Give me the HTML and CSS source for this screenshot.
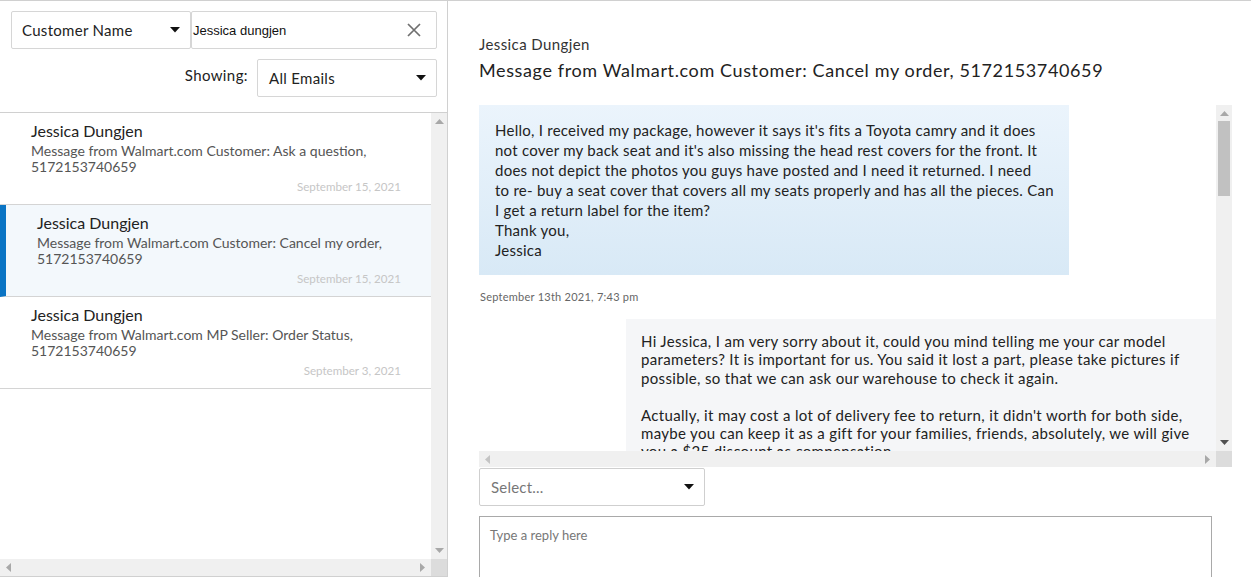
FILE: index.html
```html
<!DOCTYPE html>
<html lang="en">
<head>
<meta charset="utf-8">
<title>Messages</title>
<link rel="stylesheet" href="styles.css">
</head>
<body>
<div class="app">
  <aside class="sidebar">
    <div class="filters">
      <div class="filter-row">
        <div class="select select-field">
          <span>Customer Name</span>
          <svg class="caret" width="10" height="6" viewBox="0 0 10 6"><polygon points="0,0 10,0 5,5.5" fill="#111"/></svg>
        </div>
        <div class="search">
          <span class="search-text">Jessica dungjen</span>
          <svg class="clear" width="14" height="14" viewBox="0 0 14 14"><path d="M1 1 L13 13 M13 1 L1 13" stroke="#6f6f6f" stroke-width="1.7"/></svg>
        </div>
      </div>
      <div class="filter-row filter-row-end">
        <span class="showing">Showing:</span>
        <div class="select select-showing">
          <span>All Emails</span>
          <svg class="caret" width="10" height="6" viewBox="0 0 10 6"><polygon points="0,0 10,0 5,5.5" fill="#111"/></svg>
        </div>
      </div>
    </div>

    <div class="list-frame">
      <div class="list">
        <div class="item">
          <div class="item-name">Jessica Dungjen</div>
          <div class="item-subject">Message from Walmart.com Customer: Ask a question, 5172153740659</div>
          <div class="item-date">September 15, 2021</div>
        </div>
        <div class="item item-active">
          <div class="item-name">Jessica Dungjen</div>
          <div class="item-subject">Message from Walmart.com Customer: Cancel my order, 5172153740659</div>
          <div class="item-date">September 15, 2021</div>
        </div>
        <div class="item">
          <div class="item-name">Jessica Dungjen</div>
          <div class="item-subject">Message from Walmart.com MP Seller: Order Status, 5172153740659</div>
          <div class="item-date">September 3, 2021</div>
        </div>
      </div>
      <div class="vbar">
        <svg class="arrow" width="9" height="5" viewBox="0 0 9 5"><polygon points="0,5 9,5 4.5,0" fill="#a8a8a8"/></svg>
        <div class="vbar-track"></div>
        <svg class="arrow" width="9" height="5" viewBox="0 0 9 5"><polygon points="0,0 9,0 4.5,5" fill="#a8a8a8"/></svg>
      </div>
      <div class="hbar">
        <svg class="arrow" width="5" height="9" viewBox="0 0 5 9"><polygon points="5,0 5,9 0,4.5" fill="#a8a8a8"/></svg>
        <svg class="arrow" width="5" height="9" viewBox="0 0 5 9"><polygon points="0,0 0,9 5,4.5" fill="#a8a8a8"/></svg>
      </div>
      <div class="corner"></div>
    </div>
  </aside>

  <main class="detail">
    <div class="detail-from">Jessica Dungjen</div>
    <h1 class="detail-title">Message from Walmart.com Customer: Cancel my order, 5172153740659</h1>

    <div class="thread-frame">
      <div class="thread">
        <div class="bubble bubble-in">Hello, I received my package, however it says it's fits a Toyota camry and it does<br>not cover my back seat and it's also missing the head rest covers for the front. It<br>does not depict the photos you guys have posted and I need it returned. I need<br>to re- buy a seat cover that covers all my seats properly and has all the pieces. Can<br>I get a return label for the item?<br>Thank you,<br>Jessica</div>
        <div class="stamp">September 13th 2021, 7:43 pm</div>
        <div class="bubble bubble-out">Hi Jessica, I am very sorry about it, could you mind telling me your car model<br>parameters? It is important for us. You said it lost a part, please take pictures if<br>possible, so that we can ask our warehouse to check it again.<br><br>Actually, it may cost a lot of delivery fee to return, it didn't worth for both side,<br>maybe you can keep it as a gift for your families, friends, absolutely, we will give<br>you a $25 discount as compensation.</div>
      </div>
      <div class="vbar vbar-thread">
        <svg class="arrow" width="9" height="5" viewBox="0 0 9 5"><polygon points="0,5 9,5 4.5,0" fill="#a8a8a8"/></svg>
        <div class="vbar-track"><div class="thumb"></div></div>
        <svg class="arrow" width="9" height="5" viewBox="0 0 9 5"><polygon points="0,0 9,0 4.5,5" fill="#505050"/></svg>
      </div>
      <div class="hbar">
        <svg class="arrow" width="5" height="9" viewBox="0 0 5 9"><polygon points="5,0 5,9 0,4.5" fill="#c4c4c4"/></svg>
        <svg class="arrow" width="5" height="9" viewBox="0 0 5 9"><polygon points="0,0 0,9 5,4.5" fill="#a8a8a8"/></svg>
      </div>
      <div class="corner"></div>
    </div>

    <div class="select select-template">
      <span>Select...</span>
      <svg class="caret" width="10" height="6" viewBox="0 0 10 6"><polygon points="0,0 10,0 5,5.5" fill="#111"/></svg>
    </div>

    <div class="reply">Type a reply here</div>
  </main>
</div>
</body>
</html>
```

FILE: styles.css
```css
* { box-sizing: border-box; }

html, body {
  margin: 0;
  height: 100%;
}

body {
  font-family: Lato, "Open Sans", Arial, sans-serif;
  color: #222;
  background: #fff;
  overflow: hidden;
}

.app {
  display: flex;
  height: 577px;
  border-top: 1px solid #d0d0d0;
}

/* ---------- sidebar ---------- */
.sidebar {
  width: 448px;
  flex: none;
  display: flex;
  flex-direction: column;
  border-right: 1px solid #d0d0d0;
  border-bottom: 1px solid #d0d0d0;
}

.filters {
  padding: 10px 10px 15px 11px;
  display: flex;
  flex-direction: column;
  gap: 10px;
}

.filter-row {
  display: flex;
  align-items: center;
}

.filter-row-end {
  justify-content: flex-end;
}

.select {
  height: 38px;
  flex: none;
  border: 1px solid #d6d6d6;
  border-radius: 2px;
  display: flex;
  align-items: center;
  justify-content: space-between;
  padding: 0 10px 0 10px;
  font-size: 15px;
  letter-spacing: 0.3px;
  color: #222;
  background: #fff;
}

.select-field {
  width: 180px;
}

.select-field span {
  margin-top: -1px;
}

.search {
  flex: 1;
  height: 38px;
  border: 1px solid #d6d6d6;
  border-radius: 2px;
  display: flex;
  align-items: center;
  justify-content: space-between;
  padding: 0 15px 0 1px;
}

.search-text {
  font-family: "Liberation Sans", Arial, sans-serif;
  font-size: 13px;
  color: #111;
}

.showing {
  font-size: 15px;
  letter-spacing: 0.4px;
  color: #222;
  margin-right: 9px;
  margin-top: -6px;
}

.select-showing {
  width: 180px;
  padding-left: 11px;
}

/* list frame with scrollbars */
.list-frame {
  flex: 1;
  min-height: 0;
  display: grid;
  grid-template-columns: 1fr 16px;
  grid-template-rows: 1fr 17px;
  border-top: 1px solid #d0d0d0;
}

.list {
  overflow: hidden;
}

.item {
  height: 92px;
  border-bottom: 1px solid #d4d4d4;
  padding: 8px 30px 0 31px;
}

.item-active {
  background: #f3f8fc;
  border-left: 6px solid #0a74c4;
  padding-left: 31px;
}

.item-name {
  font-size: 16px;
  line-height: 20px;
  color: #222;
}

.item-subject {
  font-size: 14px;
  line-height: 16px;
  color: #555;
  margin-top: 2px;
}

.item-date {
  font-size: 11.6px;
  line-height: 16px;
  color: #c6c6c6;
  text-align: right;
  margin-top: 4px;
}

.vbar {
  background: #f0f0f0;
  display: flex;
  flex-direction: column;
  align-items: center;
  padding: 6px 0;
}

.vbar-track {
  flex: 1;
  width: 100%;
  padding: 0 2px;
}

.hbar {
  background: #f0f0f0;
  display: flex;
  align-items: center;
  justify-content: space-between;
  padding: 0 6px;
}

.corner {
  background: #dcdcdc;
}

.arrow {
  display: block;
  flex: none;
}

/* ---------- detail ---------- */
.detail {
  flex: 1;
  min-width: 0;
  padding: 33px 19px 0 31px;
  display: flex;
  flex-direction: column;
}

.detail-from {
  font-size: 15px;
  line-height: 20px;
  letter-spacing: 0.4px;
  color: #333;
}

.detail-title {
  margin: 3px 0 0;
  font-size: 18px;
  line-height: 26px;
  letter-spacing: 0.62px;
  font-weight: normal;
  color: #222;
}

.thread-frame {
  margin-top: 22px;
  height: 362px;
  flex: none;
  display: grid;
  grid-template-columns: 1fr 16px;
  grid-template-rows: 1fr 16px;
}

.thread {
  overflow: hidden;
  display: flex;
  flex-direction: column;
}

.bubble {
  width: 590px;
  flex: none;
  font-size: 15px;
  color: #222;
  white-space: nowrap;
}

.bubble-in {
  background: linear-gradient(#ebf4fc, #d8e9f6);
  padding: 15px 8px 15px 16px;
  line-height: 20px;
  letter-spacing: 0.25px;
}

.stamp {
  font-size: 11px;
  letter-spacing: 0.25px;
  color: #666;
  margin: 14px 0 14px 1px;
  line-height: 16px;
}

.bubble-out {
  margin-left: auto;
  background: #f5f6f8;
  padding: 13px 8px 15px 15px;
  line-height: 18.4px;
  letter-spacing: 0.33px;
}

.vbar-thread .thumb {
  margin-top: 5px;
  height: 75px;
  background: #c1c1c1;
}

.select-template {
  width: 226px;
  margin-top: 1px;
  color: #777;
  letter-spacing: 0.2px;
  padding-left: 11px;
  padding-right: 10px;
  border-color: #cfcfcf;
}

.reply {
  margin-top: 10px;
  width: 733px;
  height: 80px;
  flex: none;
  border: 1px solid #a9a9a9;
  padding: 10px 10px;
  font-size: 13px;
  color: #777;
}
```
